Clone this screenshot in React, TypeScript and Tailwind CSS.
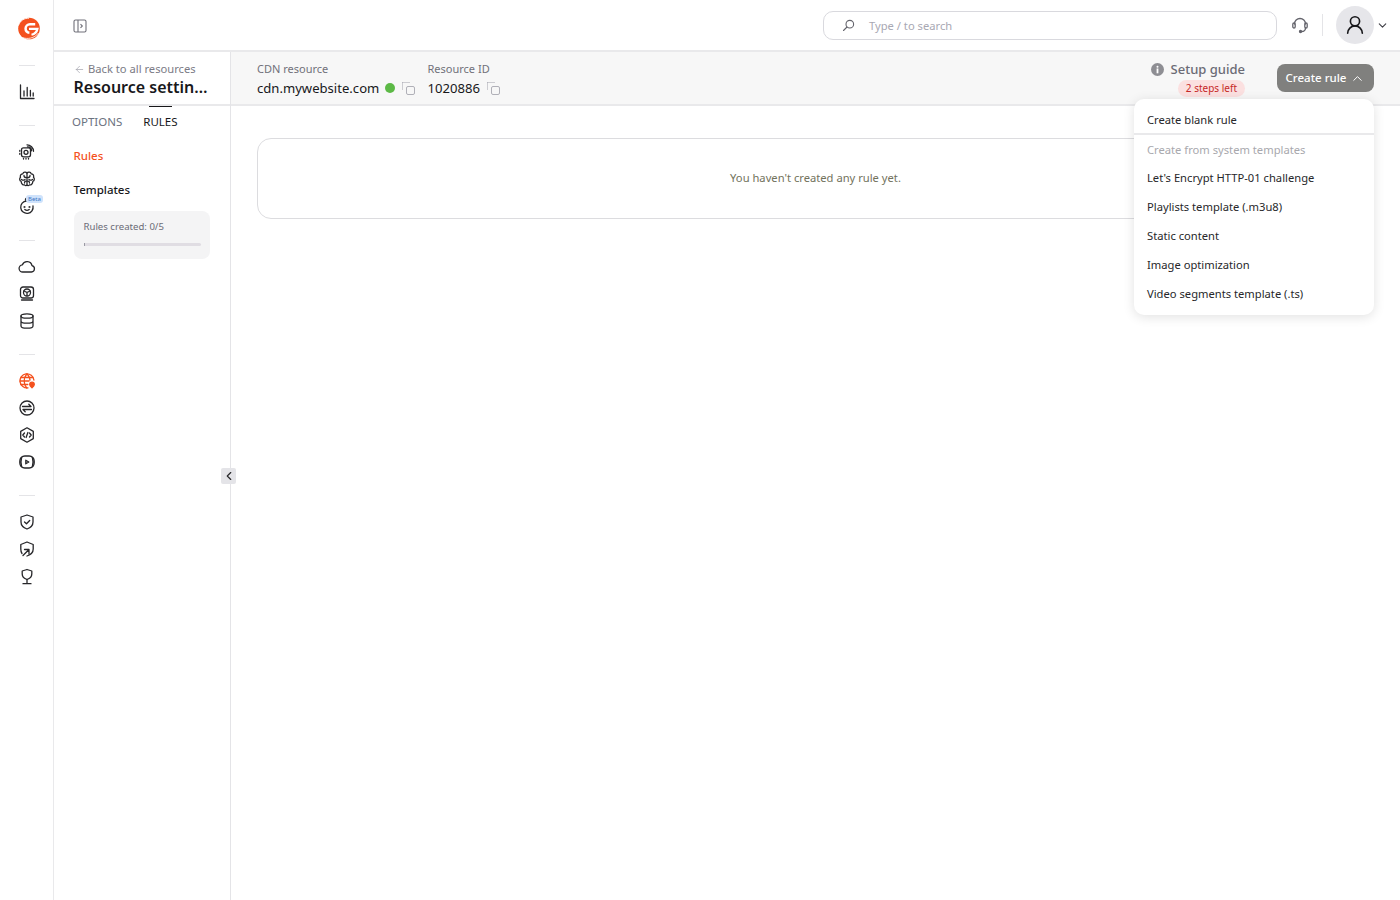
import React from 'react';
import { ArrowLeft, ChevronDown, ChevronLeft, ChevronUp, UserRound } from 'lucide-react';

const Icon = ({ children, color = '#27272a' }: { children: React.ReactNode; color?: string }) => (
  <svg width="18" height="18" viewBox="0 0 18 18" fill="none" stroke={color} strokeWidth="1.3" strokeLinecap="round" strokeLinejoin="round">
    {children}
  </svg>
);

const Slot = ({ children }: { children: React.ReactNode }) => (
  <div className="relative flex h-[27px] w-full items-center justify-center">{children}</div>
);

const Divider = () => <div className="mt-5 mb-3 h-px w-4 bg-[#e4e4e7]" />;

const Sidebar = () => (
  <aside className="flex w-[54px] shrink-0 flex-col items-center border-r border-[#e9e9eb] bg-white pt-4">
    <svg width="24" height="25" viewBox="0 0 24 25" className="mb-[24px] ml-[5px] shrink-0">
      <circle cx="12" cy="12.500" r="10.800" fill="#f4511e" />
      <path d="M1.500 9.500C3 4.500 7.500 2 12 2.200" fill="none" stroke="#fff" strokeWidth="0.900" />
      <path d="M18.200 8.200H13C10.400 8.200 8.600 10.200 8.600 12.600C8.600 15 10.200 16.600 12.400 16.800" fill="none" stroke="#fff" strokeWidth="2.500" />
      <path d="M12 12.800H20.500C20 15.500 18 18 14.500 18.800" fill="none" stroke="#fff" strokeWidth="2.200" />
      <path d="M5.500 21.500C10 23.500 17.500 22.500 21.500 17" fill="none" stroke="#fff" strokeWidth="0.800" />
    </svg>
    <div className="mb-3 h-px w-4 bg-[#e4e4e7]" />
    <Slot>
      <Icon>
        <path d="M2.500 2v13.500H16" />
        <path d="M6 13V8M9.200 13V4.500M12.400 13V7.500M15.200 13v-3" />
      </Icon>
    </Slot>
    <Divider />
    <Slot>
      <Icon>
        <g transform="translate(0 -0.700)">
          <rect x="3.500" y="5.500" width="9" height="9" rx="2" />
          <circle cx="8" cy="10" r="2" />
          <path d="M9 2.500c3.500 0 6.500 2.800 6.500 6.500M9.500 4.500c2.400 0 4 1.800 4 4M1.800 8v1M1.800 11v1M5.500 16v.8M8 16v.8M10.500 16v.8" />
        </g>
      </Icon>
    </Slot>
    <Slot>
      <Icon>
        <path d="M9 3.200C8 1.800 5.500 1.800 4.800 3.800 3 3.800 1.800 5.500 2.500 7.200 1.200 8.500 1.500 11 3.200 11.500 3.200 13.800 5 15.200 6.500 14.800 7.500 16 8.500 15.800 9 15 9.500 15.800 10.500 16 11.500 14.800 13 15.200 14.800 13.800 14.800 11.500 16.500 11 16.800 8.500 15.500 7.200 16.200 5.500 15 3.800 13.200 3.800 12.500 1.800 10 1.800 9 3.200Z" />
        <path d="M9 3.200V15M6 5.500c0 1.200 1 2 1.800 2M12 5.500c0 1.200-1 2-1.800 2M3.500 9.500c1 .8 2.500 .8 3.500 0M14.500 9.500c-1 .8-2.500 .8-3.500 0M6.500 13c0-1 .8-1.800 1.500-1.800M11.500 13c0-1-.8-1.800-1.500-1.800" />
      </Icon>
    </Slot>
    <Slot>
      <Icon>
        <path d="M8.500 4A6.200 6.200 0 1 0 15 9" />
        <path d="M8.500 4C7.500 3.500 7 2.500 8 1.500" />
        <circle cx="6.500" cy="10" r=".4" />
        <circle cx="11.500" cy="10" r=".4" />
        <path d="M6.800 12.500c1.200 1 3.200 1 4.400 0" />
      </Icon>
      <span className="absolute top-[3px] left-[26px] rounded-[3px] bg-[#cfe2fb] px-[2px] text-[6px] leading-[8px] text-[#3b76c4]">Beta</span>
    </Slot>
    <div className="mt-[21px] mb-3 h-px w-4 bg-[#e4e4e7]" />
    <Slot>
      <Icon>
        <path d="M5 14h8.500a3.200 3.200 0 0 0 .5-6.300A5 5 0 0 0 4.400 6.800 3.600 3.600 0 0 0 5 14Z" />
      </Icon>
    </Slot>
    <Slot>
      <Icon>
        <g transform="translate(0 -0.500)">
          <rect x="2.500" y="2.500" width="13" height="11" rx="2.500" />
          <circle cx="9" cy="8" r="3.500" />
          <path d="M9 8v3.200M9 8l-3-1.500M9 8l3-1.500M3.500 15.500h11" />
        </g>
      </Icon>
    </Slot>
    <Slot>
      <Icon>
        <ellipse cx="9" cy="4" rx="6" ry="2.200" />
        <path d="M3 4v10c0 1.200 2.700 2.200 6 2.200s6-1 6-2.200V4M3 9c0 1.200 2.700 2.200 6 2.200S15 10.200 15 9" />
      </Icon>
    </Slot>
    <Divider />
    <Slot>
      <Icon color="#f4511e">
        <path d="M10 15.800A7 7 0 1 1 15.900 8" />
        <path d="M2 9h9M2.800 5.500h12M2.800 12.500h7M8.800 2c-3.500 4-3.500 10 0 14M9.200 2c1.800 2 2.700 4 2.800 6" />
        <path d="M14 15.800c-1.500-1.300-2.300-2.300-2.300-3.300a2.300 2.300 0 0 1 4.600 0c0 1-.8 2-2.300 3.300Z" fill="#f4511e" />
      </Icon>
    </Slot>
    <Slot>
      <Icon>
        <circle cx="9" cy="9" r="7" />
        <path d="M4.500 7.500H13L10.800 5.200M13.500 10.500H5L7.200 12.800" />
      </Icon>
    </Slot>
    <Slot>
      <Icon>
        <path d="M9 1.800l6.300 3.600v7.200L9 16.200l-6.300-3.600V5.400Z" />
        <path d="M6.500 7L4.800 9l1.700 2M11.500 7l1.700 2-1.700 2M9.900 6.500L8.100 11.500" />
      </Icon>
    </Slot>
    <Slot>
      <Icon>
        <rect x="1.800" y="3" width="14.400" height="12" rx="5" />
        <path d="M3.500 4.500C2.800 7 2.800 11 3.500 13.500M14.500 4.500C15.200 7 15.200 11 14.500 13.500" strokeWidth="1.500" />
        <path d="M7.800 7.200L10.800 9 7.800 10.800Z" />
      </Icon>
    </Slot>
    <Divider />
    <Slot>
      <Icon>
        <path d="M9 2l6 2v5c0 3.500-2.500 5.800-6 7-3.500-1.200-6-3.500-6-7V4Z" />
        <path d="M6.500 9l2 1.800 3.200-3.300" />
      </Icon>
    </Slot>
    <Slot>
      <Icon>
        <path d="M4 13.500C3 12.200 2.800 10.500 2.800 9V4.500L9 2l6.200 2.500V9c0 3.500-2.500 5.800-6.200 7" />
        <path d="M5 15.500l5.500-5.500M6.500 9.500H11v4.500" />
      </Icon>
    </Slot>
    <Slot>
      <Icon>
        <path d="M9 12.500c-2.800-1-4.800-3-4.800-5.500V4L9 2.500 13.800 4v3C13.800 9.500 11.800 11.500 9 12.500Z" />
        <path d="M9 12.500v4M5 16.700h8" />
      </Icon>
    </Slot>
  </aside>
);

const TopBar = () => (
  <header className="flex h-[52px] shrink-0 items-center border-b-2 border-[#e9e9eb] bg-white pl-[19px]">
    <svg width="14" height="14" viewBox="0 0 14 14" fill="none" stroke="#71717a" strokeWidth="1.100" className="mt-[1px] shrink-0">
      <rect x="1" y="1" width="12" height="12" rx="1.500" />
      <path d="M5 1v12M7.500 5.200L9.300 7 7.500 8.800" />
    </svg>
    <div className="ml-[736px] flex h-[29px] w-[454px] shrink-0 items-center rounded-[10px] border border-[#d9d9de] pl-[18px]">
      <svg width="13" height="13" viewBox="0 0 13 13" fill="none" stroke="#63636b" strokeWidth="1.100" strokeLinecap="round">
        <circle cx="7.800" cy="5.200" r="3.800" />
        <path d="M5 8L1.500 11.500" />
      </svg>
      <span className="ml-[14px] pt-[2px] text-[11.200px] text-[#a8a8b3]">Type / to search</span>
    </div>
    <svg width="18" height="18" viewBox="0 0 18 18" fill="none" stroke="#63636b" strokeWidth="1.300" strokeLinecap="round" className="ml-[14px] shrink-0">
      <path d="M3.500 8C3.500 4.800 6 2.500 9 2.500s5.500 2.300 5.500 5.500" />
      <rect x="1.800" y="7" width="2.400" height="5" rx="1.200" />
      <rect x="13.800" y="7" width="2.400" height="5" rx="1.200" />
      <path d="M14.500 12c0 2-1.500 3.500-4 3.500" />
      <circle cx="9.500" cy="15.500" r="1" fill="#63636b" />
    </svg>
    <div className="ml-[13px] h-[22px] w-px shrink-0 bg-[#e4e4e7]" />
    <div className="ml-[13px] flex h-[38px] w-[38px] shrink-0 items-center justify-center rounded-full bg-[#e6e6ea]">
      <UserRound size={22} color="#18181b" strokeWidth={1.800} />
    </div>
    <ChevronDown size={13} color="#3f3f46" className="ml-[2px] shrink-0" />
  </header>
);

const CopyIcon = () => (
  <svg width="13" height="13" viewBox="0 0 13 13" fill="none" strokeWidth="1" className="ml-[7px] shrink-0">
    <rect x="4.500" y="4.500" width="8" height="8" rx="1.500" stroke="#b0b0b8" />
    <path d="M.5 .5H8M.5 .5V8" stroke="#a1a1aa" strokeDasharray="1 1" />
  </svg>
);

const LeftPanel = () => (
  <div className="flex w-[177px] shrink-0 flex-col border-r border-[#e4e4e7] bg-white">
    <div className="h-[54px] border-b-2 border-[#e9e9eb] pt-[10px] pl-[19.500px]">
      <div className="flex items-center gap-[3.500px] text-[11.200px] leading-[14px] text-[#7b7b85]">
        <ArrowLeft size={11} color="#a1a1aa" strokeWidth={1.500} />
        <span>Back to all resources</span>
      </div>
      <div className="whitespace-nowrap text-[16px] leading-[22px] font-semibold text-[#18181b]">Resource settin…</div>
    </div>
    <div className="relative flex h-[25px] items-end gap-[21px] pl-[18px] text-[11.500px] leading-[16px]">
      <span className="pb-[1px] text-[#6b7280]">OPTIONS</span>
      <span className="pb-[1px] text-[#18181b]">RULES</span>
      <div className="absolute top-0 left-[95px] h-[1px] w-[23px] bg-[#18181b]" />
    </div>
    <div className="mt-[17px] pl-[19.500px] text-[11.500px] leading-[16px] font-medium text-[#f4511e]">Rules</div>
    <div className="mt-[18px] pl-[19.500px] text-[11.500px] leading-[16px] font-medium text-[#18181b]">Templates</div>
    <div className="mt-[13px] ml-[20px] h-[48px] w-[136px] rounded-[8px] bg-[#f4f4f5] px-[9.500px] pt-[9px]">
      <div className="text-[9.600px] leading-[14px] text-[#6b6b75]">Rules created: 0/5</div>
      <div className="mt-[9px] h-[3px] w-[117px] rounded-full bg-[#e0dde3]">
        <div className="h-[3px] w-[1px] bg-[#9a9aa3]" />
      </div>
    </div>
  </div>
);

const MenuItem = ({ children }: { children: React.ReactNode }) => (
  <div className="flex h-[29px] items-center pl-[13px] text-[11.200px] text-[#27272a]">{children}</div>
);

const Dropdown = () => (
  <div className="absolute top-[-7px] right-[26px] h-[216px] w-[240px] rounded-[10px] bg-white shadow-[0_2px_12px_rgba(0,0,0,0.12)]">
    <div className="flex h-[36px] items-center border-b-2 border-[#e9e9eb] pt-[8px] pl-[13px] text-[11.200px] text-[#27272a]">Create blank rule</div>
    <div className="flex h-[29px] items-center pt-[1px] pl-[13px] text-[11.200px] text-[#a8a8ad]">Create from system templates</div>
    <MenuItem>Let's Encrypt HTTP-01 challenge</MenuItem>
    <MenuItem>Playlists template (.m3u8)</MenuItem>
    <MenuItem>Static content</MenuItem>
    <MenuItem>Image optimization</MenuItem>
    <MenuItem>Video segments template (.ts)</MenuItem>
  </div>
);

const Header = () => (
  <div className="flex h-[54px] shrink-0 items-start border-b-2 border-[#e9e9eb] bg-[#f7f7f7] pl-[26px]">
    <div className="w-[170.500px] pt-[10px]">
      <div className="text-[11px] leading-[14px] text-[#71717a]">CDN resource</div>
      <div className="mt-[2px] flex items-center text-[13.100px] leading-[20px] text-[#18181b]">
        <span>cdn.mywebsite.com</span>
        <span className="ml-[6px] h-[10px] w-[10px] rounded-full bg-[#5cb946]" />
        <CopyIcon />
      </div>
    </div>
    <div className="pt-[10px]">
      <div className="text-[11px] leading-[14px] text-[#71717a]">Resource ID</div>
      <div className="mt-[2px] flex items-center text-[13.100px] leading-[20px] text-[#18181b]">
        <span>1020886</span>
        <CopyIcon />
      </div>
    </div>
    <div className="ml-auto flex flex-col items-end pt-[8px]">
      <div className="flex items-center gap-[7px] text-[13px] leading-[18px] font-medium text-[#6b6b75]">
        <svg width="13" height="13" viewBox="0 0 13 13" className="shrink-0">
          <circle cx="6.500" cy="6.500" r="6.500" fill="#8e8e93" />
          <circle cx="6.500" cy="3.700" r="1" fill="#fff" />
          <rect x="5.600" y="5.500" width="1.800" height="4.800" fill="#fff" />
        </svg>
        <span>Setup guide</span>
      </div>
      <span className="mt-[2px] rounded-full bg-[#fbe0e0] px-[8px] text-[10px] leading-[17px] text-[#c62828]">2 steps left</span>
    </div>
    <div className="mt-[12px] mr-[26px] ml-[32px] flex h-[28px] w-[97px] items-center justify-center gap-[4px] rounded-[8px] bg-[#80807e] text-[11.500px] font-medium text-white">
      Create rule
      <ChevronUp size={15} color="#fff" strokeWidth={1.600} />
    </div>
  </div>
);

export default function App() {
  return (
    <div className="flex h-[900px] w-[1400px] overflow-hidden bg-white font-['Noto_Sans',sans-serif]">
      <Sidebar />
      <div className="flex min-w-0 flex-1 flex-col">
        <TopBar />
        <div className="flex min-h-0 flex-1">
          <LeftPanel />
          <main className="relative flex min-w-0 flex-1 flex-col">
            <Header />
            <div className="relative flex-1 pt-[32px] pr-[26px] pl-[26px]">
              <div className="flex h-[81px] items-center justify-center rounded-[14px] border border-[#dcdcdf] text-[11.200px] text-[#72725c]">
                You haven't created any rule yet.
              </div>
              <Dropdown />
            </div>
            <div className="absolute top-[416px] left-[-10px] flex h-[16px] w-[15px] items-center justify-center rounded-[2px] bg-[#e4e4e8]">
              <ChevronLeft size={14} color="#27272a" strokeWidth={2} />
            </div>
          </main>
        </div>
      </div>
    </div>
  );
}
